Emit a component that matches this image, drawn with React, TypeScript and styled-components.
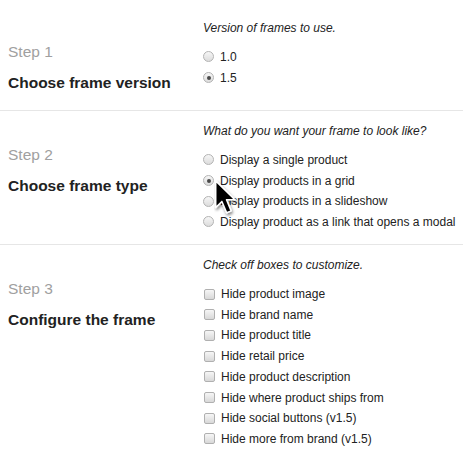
import React from 'react';
import styled, { createGlobalStyle } from 'styled-components';

const GlobalStyle = createGlobalStyle`
  html, body {
    margin: 0;
    padding: 0;
    background: #fff;
  }
  body {
    font-family: "Liberation Sans", Arial, Helvetica, sans-serif;
    color: #333;
  }
`;

type Option = { label: string, checked?: boolean };

const versionOptions: Option[] = [
  { label: '1.0' },
  { label: '1.5', checked: true },
];

const typeOptions: Option[] = [
  { label: 'Display a single product' },
  { label: 'Display products in a grid', checked: true },
  { label: 'Display products in a slideshow' },
  { label: 'Display product as a link that opens a modal' },
];

const configOptions: string[] = [
  'Hide product image',
  'Hide brand name',
  'Hide product title',
  'Hide retail price',
  'Hide product description',
  'Hide where product ships from',
  'Hide social buttons (v1.5)',
  'Hide more from brand (v1.5)',
];

const App: React.FC = () => (
  <Page>
    <GlobalStyle />
    <Section>
      <StepLabel step={1} title="Choose frame version" />
      <Options>
        <Caption>Version of frames to use.</Caption>
        {versionOptions.map(o => (
          <Row key={o.label}>
            <Radio checked={o.checked} />
            {o.label}
          </Row>
        ))}
      </Options>
    </Section>
    <Section>
      <StepLabel step={2} title="Choose frame type" />
      <Options>
        <Caption>What do you want your frame to look like?</Caption>
        {typeOptions.map(o => (
          <Row key={o.label}>
            <Radio checked={o.checked} />
            {o.label}
          </Row>
        ))}
      </Options>
    </Section>
    <Section last>
      <StepLabel step={3} title="Configure the frame" />
      <Options>
        <Caption>Check off boxes to customize.</Caption>
        {configOptions.map(label => (
          <Row key={label}>
            <Checkbox />
            {label}
          </Row>
        ))}
      </Options>
    </Section>
    <Pointer width="24" height="38" viewBox="0 0 14 22">
      <defs>
        <filter id="shadow" x="-40%" y="-40%" width="180%" height="180%">
          <feGaussianBlur in="SourceAlpha" stdDeviation="0.8" />
          <feOffset dx="0.4" dy="1" result="b" />
          <feComponentTransfer><feFuncA type="linear" slope="0.5" /></feComponentTransfer>
          <feMerge><feMergeNode /><feMergeNode in="SourceGraphic" /></feMerge>
        </filter>
      </defs>
      <path
        d="M1 1 L1 16.5 L4.6 13 L7.4 19.6 L10 18.5 L7.3 12 L12.2 12 Z"
        fill="#000"
        stroke="#fff"
        strokeWidth="0.9"
        strokeLinejoin="round"
        filter="url(#shadow)"
      />
    </Pointer>
  </Page>
);

const StepLabel: React.FC<{ step: number, title: string }> = ({ step, title }) => (
  <Left>
    <Step>Step {step}</Step>
    <Heading>{title}</Heading>
  </Left>
);

const Page = styled.div`
  position: relative;
  width: 463px;
  padding-top: 8px;
`;
const Section = styled.div<{ last?: boolean }>`
  display: grid;
  grid-template-columns: 203px 1fr;
  padding: 12px 0 12px;
  border-bottom: ${({ last }) => last ? 'none' : '1px solid #e6e6e6'};
`;
const Left = styled.div`
  padding: 23px 0 5px 8px;
`;
const Step = styled.div`
  font-size: 15.5px;
  line-height: 18px;
  color: #a0a0a0;
`;
const Heading = styled.div`
  margin-top: 12px;
  font-size: 15.5px;
  line-height: 20px;
  font-weight: bold;
  color: #222;
`;
const Options = styled.div`
  display: flex;
  flex-direction: column;
`;
const Caption = styled.div`
  font-size: 12px;
  line-height: 16px;
  font-style: italic;
  color: #222;
  margin-bottom: 10.5px;
`;
const Row = styled.div`
  display: flex;
  align-items: center;
  height: 20.7px;
  font-size: 12px;
  color: #222;
`;
const Radio = styled.span<{ checked?: boolean }>`
  position: relative;
  width: 11px;
  height: 11px;
  box-sizing: border-box;
  border-radius: 50%;
  border: 1px solid #b3b3b3;
  background: linear-gradient(#f6f6f6, #dcdcdc);
  margin-right: 6px;
  flex-shrink: 0;
  &::after {
    content: '';
    display: ${({ checked }) => checked ? 'block' : 'none'};
    position: absolute;
    left: 2.5px;
    top: 2.5px;
    width: 4px;
    height: 4px;
    border-radius: 50%;
    background: #4a4a4a;
  }
`;
const Checkbox = styled.span`
  width: 11px;
  height: 11px;
  box-sizing: border-box;
  border-radius: 2px;
  border: 1px solid #b0b0b0;
  background: linear-gradient(#f6f6f6, #d8d8d8);
  margin: 0 6px 0 1px;
  flex-shrink: 0;
`;
const Pointer = styled.svg`
  position: absolute;
  left: 214px;
  top: 179px;
  pointer-events: none;
`;

export default App;
